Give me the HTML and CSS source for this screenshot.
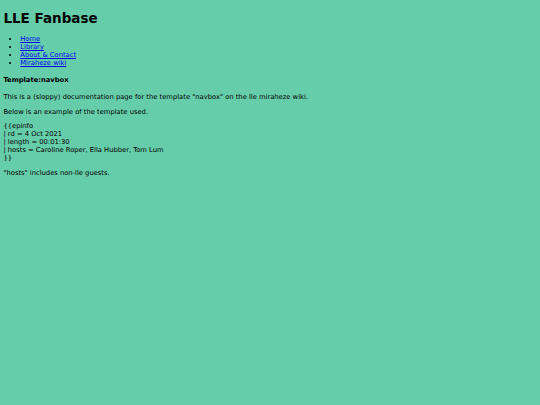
FILE: index.html
```html
<!DOCTYPE html>
<html>
<head>
<meta charset="utf-8">
<title>LLE Fanbase</title>
<link rel="stylesheet" href="styles.css">
</head>
<body>
<h1 class="site-title">LLE Fanbase</h1>
<ul class="nav">
<li><a href="#">Home</a></li>
<li><a href="#">Library</a></li>
<li><a href="#">About &amp; Contact</a></li>
<li><a href="#">Miraheze wiki</a></li>
</ul>
<h4 class="page-title">Template:navbox</h4>
<p class="text">This is a (sloppy) documentation page for the template "navbox" on the lle miraheze wiki.</p>
<p class="text">Below is an example of the template used.</p>
<p class="text code">{{epinfo<br>| rd = 4 Oct 2021<br>| length = 00:01:30<br>| hosts = Caroline Roper, Ella Hubber, Tom Lum<br>}}</p>
<p class="text">"hosts" includes non-lle guests.</p>
</body>
</html>
```
FILE: styles.css
```css
html, body {
  background: #66cdaa;
}
body {
  margin: 0 3.4px;
  font-family: "DejaVu Sans", sans-serif;
  font-size: 6.75px;
  color: #000;
}
.site-title {
  font-size: 13.5px;
  margin: 10px 0 9px;
}
.nav {
  margin: 6.75px 0;
  padding-left: 16.9px;
}
.nav a {
  color: #0000ee;
}
.page-title {
  font-size: 6.75px;
  margin: 9px 0;
}
.text {
  margin: 6.6px 0;
}
```
